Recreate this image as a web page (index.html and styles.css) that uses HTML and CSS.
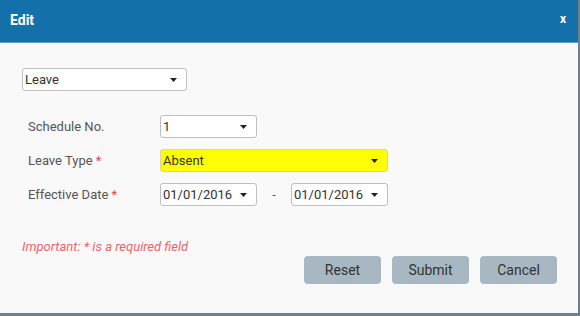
FILE: index.html
```html
<!DOCTYPE html>
<html lang="en">
<head>
    <meta charset="UTF-8">
    <title>Edit</title>
    <link rel="stylesheet" href="styles.css">
</head>
<body>
    <div class="dialog">
        <div class="header">
            <span class="title">Edit</span>
            <span class="close">x</span>
        </div>

        <div class="content">
            <div class="select type-select">
                <span>Leave</span>
                <svg class="caret" width="7" height="4" viewBox="0 0 7 4"><path d="M0 0H7L3.5 4Z"/></svg>
            </div>

            <div class="form">
                <label>Schedule No.</label>
                <div class="field">
                    <div class="select small">
                        <span>1</span>
                        <svg class="caret" width="7" height="4" viewBox="0 0 7 4"><path d="M0 0H7L3.5 4Z"/></svg>
                    </div>
                </div>

                <label>Leave Type <span class="req">*</span></label>
                <div class="field">
                    <div class="select wide highlight">
                        <span>Absent</span>
                        <svg class="caret" width="7" height="4" viewBox="0 0 7 4"><path d="M0 0H7L3.5 4Z"/></svg>
                    </div>
                </div>

                <label>Effective Date <span class="req">*</span></label>
                <div class="field">
                    <div class="select small">
                        <span>01/01/2016</span>
                        <svg class="caret" width="7" height="4" viewBox="0 0 7 4"><path d="M0 0H7L3.5 4Z"/></svg>
                    </div>
                    <span class="dash">-</span>
                    <div class="select small">
                        <span>01/01/2016</span>
                        <svg class="caret" width="7" height="4" viewBox="0 0 7 4"><path d="M0 0H7L3.5 4Z"/></svg>
                    </div>
                </div>
            </div>

            <div class="note">Important: * is a required field</div>

            <div class="actions">
                <button class="btn">Reset</button>
                <button class="btn">Submit</button>
                <button class="btn">Cancel</button>
            </div>
        </div>
    </div>
</body>
</html>
```

FILE: styles.css
```css
body {
    margin: 0;
    font-family: Roboto, "Liberation Sans", sans-serif;
    font-size: 13px;
    color: #333;
    background-color: #f9f9f9;
}

.dialog {
    width: 580px;
    height: 316px;
    box-sizing: border-box;
    background-color: #f9f9f9;
    border-right: 2px solid #6e808a;
    border-bottom: 3px solid #6e808a;
    display: flex;
    flex-direction: column;
}

.header {
    height: 42px;
    background-color: #1470a8;
    border-bottom: 1px solid #5a9cc8;
    display: flex;
    align-items: center;
    justify-content: space-between;
    padding: 0 12px 0 10px;
    color: #fff;
}

.title {
    font-size: 14px;
    font-weight: bold;
    margin-top: -2px;
}

.close {
    font-size: 12px;
    font-weight: bold;
    margin-top: -4px;
}

.content {
    padding: 25px 21px 0 22px;
    display: flex;
    flex-direction: column;
}

.select {
    height: 23px;
    box-sizing: border-box;
    border: 1px solid #bfbfbf;
    border-radius: 3px;
    background-color: #fff;
    display: flex;
    align-items: center;
    justify-content: space-between;
    padding: 0 9px 0 2px;
    color: #333;
}

.caret {
    fill: #222;
}

.type-select {
    width: 165px;
}

.small {
    width: 97px;
}

.wide {
    width: 228px;
}

.highlight {
    background-color: #ffff00;
    border-color: #d8d890;
}

.form {
    display: grid;
    grid-template-columns: 132px auto;
    row-gap: 11px;
    margin: 24px 0 0 6px;
    align-items: center;
}

label {
    color: #555;
}

.req {
    color: #e04848;
}

.field {
    display: flex;
    align-items: center;
}

.dash {
    width: 34px;
    text-align: center;
    color: #555;
}

.note {
    margin-top: 33px;
    color: #e8666a;
    font-style: italic;
    line-height: 16px;
}

.actions {
    display: flex;
    justify-content: flex-end;
    gap: 11px;
    margin-top: 1px;
}

.btn {
    width: 77px;
    height: 28px;
    border: none;
    border-radius: 4px;
    background-color: #a7b8c2;
    color: #333;
    font-family: Roboto, "Liberation Sans", sans-serif;
    font-size: 14px;
}
```
